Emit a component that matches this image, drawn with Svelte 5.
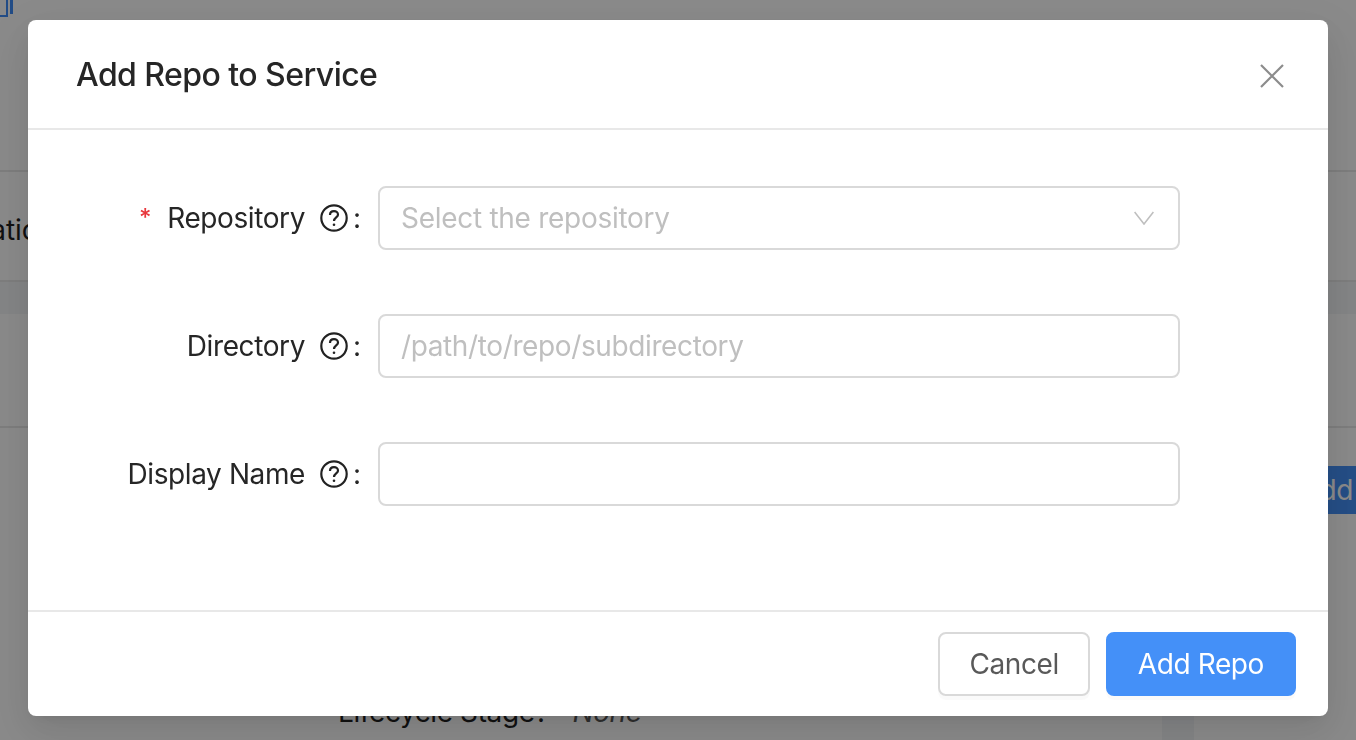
<script>
	// Form rows shown in the dialog
	const fields = [
		{ label: 'Repository', required: true, placeholder: 'Select the repository', select: true },
		{ label: 'Directory', placeholder: '/path/to/repo/subdirectory' },
		{ label: 'Display Name', placeholder: '' }
	];
</script>

<div class="page">
	<div class="page-top">
		<span class="logo-box"></span><span class="logo-bar"></span>
	</div>
	<div class="page-tabs"><span class="tab-text">Configuration</span></div>
	<div class="page-band"></div>
	<div class="page-section"></div>
	<div class="page-actions">
		<button class="page-add" tabindex="-1">Add</button>
	</div>
	<div class="page-meta">
		<div class="meta-text"><span>Lifecycle Stage?</span><em>None</em></div>
		<div class="meta-col"></div>
	</div>
</div>

<div class="overlay">
	<div class="modal">
		<header class="modal-head">
			<h2>Add Repo to Service</h2>
			<button class="close" aria-label="Close">
				<svg width="24" height="24" viewBox="0 0 24 24" fill="none" stroke="#8c8c8c" stroke-width="2.2">
					<path d="M1 1 L23 23 M23 1 L1 23" />
				</svg>
			</button>
		</header>

		<form class="modal-body">
			{#each fields as field}
				<div class="row">
					<div class="label">
						{#if field.required}<span class="req">*</span>{/if}
						<span>{field.label}</span>
						<svg class="help" width="28" height="28" viewBox="0 0 28 28" fill="none" stroke="#222" stroke-width="2.2">
							<circle cx="14" cy="14" r="12.7" />
							<path d="M10 11 C10 8.4 11.8 7.2 14 7.2 C16.2 7.2 18 8.6 18 10.7 C18 13.4 14 13.6 14 17" />
							<circle cx="14" cy="20.8" r="1.3" fill="#222" stroke="none" />
						</svg>
						<span class="colon">:</span>
					</div>
					{#if field.select}
						<div class="input select">
							<span>{field.placeholder}</span>
							<svg width="20" height="14" viewBox="0 0 20 14" fill="none" stroke="#bfbfbf" stroke-width="1.6">
								<path d="M0.6 1 L10 13 L19.4 1" />
							</svg>
						</div>
					{:else}
						<input class="input" placeholder={field.placeholder} />
					{/if}
				</div>
			{/each}
		</form>

		<footer class="modal-foot">
			<button type="button" class="btn">Cancel</button>
			<button type="button" class="btn primary">Add Repo</button>
		</footer>
	</div>
</div>

<style>
	:global(body) {
		margin: 0;
		height: 740px;
		overflow: hidden;
		font-family: Inter, "Liberation Sans", sans-serif;
	}

	.page {
		height: 740px;
		overflow: hidden;
		display: flex;
		flex-direction: column;
		background: #fff;
		color: #1f1f1f;
		font-size: 28px;
	}

	.page-top {
		height: 170px;
		flex: none;
		display: flex;
		align-items: flex-start;
		gap: 2px;
		border-bottom: 2px solid #e8e8e8;
	}

	.logo-box {
		width: 6px;
		height: 15px;
		border: solid #3f8cf8;
		border-width: 0 2px 2px 0;
	}

	.logo-bar {
		width: 3px;
		height: 14px;
		background: #3f8cf8;
	}

	.page-tabs {
		height: 100px;
		flex: none;
		padding-top: 8px;
		display: flex;
		align-items: center;
		white-space: nowrap;
	}

	.tab-text {
		margin-left: -125px;
	}

	.page-band {
		height: 32px;
		flex: none;
		background: #f3f5f8;
		border-top: 2px solid #e8e8e8;
	}

	.page-section {
		height: 112px;
		flex: none;
		border-bottom: 2px solid #e8e8e8;
	}

	.page-actions {
		height: 268px;
		flex: none;
		padding-top: 38px;
		box-sizing: border-box;
		display: flex;
		justify-content: flex-end;
		align-items: flex-start;
	}

	.page-add {
		width: 60px;
		height: 48px;
		padding: 0;
		border: 0;
		background: #4490f8;
		color: #fff;
		font: inherit;
		text-align: right;
		padding-right: 3px;
		letter-spacing: -0.4px;
		white-space: nowrap;
	}

	.page-meta {
		flex: 1;
		display: grid;
		grid-template-columns: 1162px 32px 1fr;
	}

	.meta-text {
		height: 32px;
		display: flex;
		align-items: center;
		gap: 24px;
		padding-left: 338px;
		letter-spacing: -0.4px;
	}

	.meta-text em {
		color: #555;
	}

	.meta-col {
		background: #f3f5f8;
	}

	.overlay {
		position: fixed;
		inset: 0;
		background: rgba(0, 0, 0, 0.46);
		display: flex;
		align-items: flex-start;
		justify-content: center;
		padding-top: 20px;
	}

	.modal {
		width: 1300px;
		height: 696px;
		display: flex;
		flex-direction: column;
		background: #fff;
		border-radius: 8px;
		box-shadow: 0 12px 32px rgba(0, 0, 0, 0.08), 0 6px 12px -8px rgba(0, 0, 0, 0.12), 0 18px 56px 16px rgba(0, 0, 0, 0.05);
		color: #262626;
	}

	.modal-head {
		height: 108px;
		box-sizing: content-box;
		flex: none;
		display: flex;
		align-items: center;
		justify-content: space-between;
		padding: 0 44px 0 48px;
		border-bottom: 2px solid #e8e8e8;
	}

	h2 {
		margin: 1px 0 0;
		font-size: 32px;
		line-height: 44px;
		font-weight: 500;
		letter-spacing: -0.55px;
		color: #262626;
	}

	.close {
		width: 24px;
		height: 24px;
		margin-top: 4px;
		padding: 0;
		border: 0;
		background: none;
		display: flex;
	}

	.modal-body {
		flex: 1;
		display: flex;
		flex-direction: column;
		gap: 64px;
		padding-top: 56px;
	}

	.row {
		display: flex;
		align-items: center;
		height: 64px;
	}

	.label {
		width: 332px;
		flex: none;
		margin-right: 18px;
		display: flex;
		align-items: center;
		justify-content: flex-end;
		font-size: 28px;
		letter-spacing: -0.4px;
		color: #262626;
	}

	.req {
		color: #e8383d;
		font-size: 24px;
		font-weight: 500;
		margin-right: 16px;
		line-height: 1;
	}

	.help {
		margin-left: 15px;
	}

	.colon {
		margin-left: 5px;
		width: 7px;
	}

	.input {
		box-sizing: border-box;
		width: 802px;
		height: 64px;
		padding: 0 24px 0 21px;
		border: 2px solid #d9d9d9;
		border-radius: 8px;
		background: #fff;
		font-family: inherit;
		font-size: 28px;
		letter-spacing: -0.38px;
		color: #262626;
		outline: none;
		margin: 0;
	}

	.input::placeholder {
		color: #bfbfbf;
		opacity: 1;
	}

	.select {
		display: flex;
		align-items: center;
		justify-content: space-between;
		letter-spacing: -0.28px;
		color: #bfbfbf;
	}

	.modal-foot {
		height: 106px;
		flex: none;
		box-sizing: border-box;
		display: flex;
		justify-content: flex-end;
		align-items: flex-start;
		gap: 16px;
		padding: 20px 32px 0 0;
		border-top: 2px solid #e8e8e8;
	}

	.btn {
		box-sizing: border-box;
		height: 64px;
		padding: 0 29px;
		border: 2px solid #d9d9d9;
		border-radius: 8px;
		background: #fff;
		color: #595959;
		font-family: inherit;
		font-size: 28px;
		letter-spacing: -0.4px;
		box-shadow: 0 4px 0 rgba(0, 0, 0, 0.02);
	}

	.primary {
		padding: 0 30px;
		border-color: #4490f8;
		background: #4490f8;
		color: #fff;
	}
</style>
